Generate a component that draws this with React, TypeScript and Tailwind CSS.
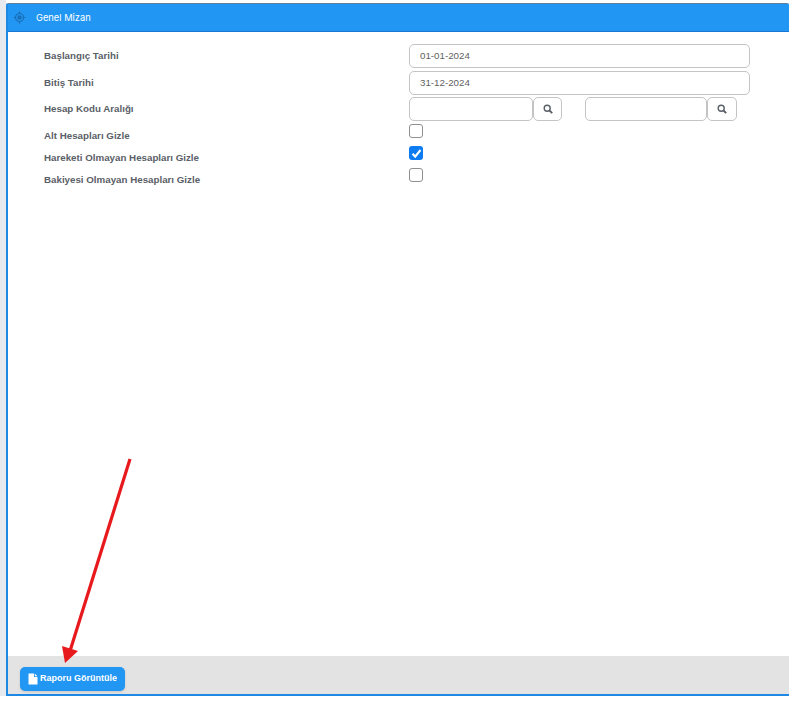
import React from "react";

function Search() {
  return (
    <svg width="10" height="10" viewBox="0 0 10 10" fill="none" stroke="#5a6068" strokeWidth="1.4">
      <circle cx="4.2" cy="4.2" r="3" />
      <path d="M6.5 6.5 9.2 9.2" strokeWidth="1.9" />
    </svg>
  );
}

function Label({ children }: { children: React.ReactNode }) {
  return <span className="w-[365px] shrink-0 text-[9.75px] font-bold text-[#5a6067]">{children}</span>;
}

function TextBox({ value, className }: { value?: string; className: string }) {
  return (
    <div className={`h-6 rounded-[5px] border border-[#c4c4c4] bg-white pl-[10px] text-[9.75px] leading-[22px] text-[#5f5f5f] ${className}`}>
      {value}
    </div>
  );
}

function SearchButton({ className }: { className: string }) {
  return (
    <div className={`flex h-6 items-center justify-center rounded-[5px] border border-[#c4c4c4] bg-white ${className}`}>
      <Search />
    </div>
  );
}

function Check({ checked }: { checked?: boolean }) {
  return checked ? (
    <div className="flex h-[14px] w-[14px] items-center justify-center rounded-[3px] bg-[#0d7bf2]">
      <svg width="11" height="11" viewBox="0 0 11 11" fill="none" stroke="#fff" strokeWidth="2.2">
        <path d="M1.500 5.800 4.200 8.600 9.500 2" />
      </svg>
    </div>
  ) : (
    <div className="h-[14px] w-[14px] rounded-[3px] border border-[#8f8f8f] bg-white" />
  );
}

function CheckRow({ label, checked }: { label: string; checked?: boolean }) {
  return (
    <div className="flex h-[22px] items-start">
      <div className="w-[365px] shrink-0 pt-[4px] leading-[12px]">
        <Label>{label}</Label>
      </div>
      <Check checked={checked} />
    </div>
  );
}

export default function App() {
  return (
    <div className="relative flex h-[704px] w-[798px] bg-white font-['Liberation_Sans',sans-serif]">
      <div className="h-[696px] w-[6px] shrink-0 bg-[#e6e9ee]" />
      <div className="mt-[3px] flex h-[693px] w-[783px] shrink-0 flex-col rounded-t-[2px] border-x-2 border-r-0 border-b-2 border-[#1e88e5] border-t border-t-[#5f7f9c] bg-white">
        <div className="flex h-[28px] shrink-0 items-center border-b border-[#1976d2] bg-[#2196f3] pl-[5px] font-['Inter',sans-serif] text-[9.3px] text-white">
          <svg width="13" height="13" viewBox="0 0 13 13" fill="none" stroke="#1a6fb8" strokeWidth="1.2">
            <circle cx="6.500" cy="6.500" r="4" />
            <circle cx="6.500" cy="6.500" r="1.600" fill="#1a6fb8" />
            <path d="M6.500 0.500v2M6.500 10.500v2M0.500 6.500h2M10.500 6.500h2" />
          </svg>
          <span className="ml-[10px] pt-px">Genel Mizan</span>
        </div>
        <div className="flex-1 pl-[36px] pt-3">
          <div className="flex h-6 items-center">
            <Label>Başlangıç Tarihi</Label>
            <TextBox value="01-01-2024" className="w-[341px]" />
          </div>
          <div className="mt-[3px] flex h-6 items-center">
            <Label>Bitiş Tarihi</Label>
            <TextBox value="31-12-2024" className="w-[341px]" />
          </div>
          <div className="mt-[2px] flex h-6 items-center">
            <Label>Hesap Kodu Aralığı</Label>
            <TextBox className="w-[124px]" />
            <SearchButton className="w-[29px]" />
            <TextBox className="ml-[23px] w-[122px]" />
            <SearchButton className="w-[30px]" />
          </div>
          <div className="mt-[3px]">
            <CheckRow label="Alt Hesapları Gizle" />
            <CheckRow label="Hareketi Olmayan Hesapları Gizle" checked />
            <CheckRow label="Bakiyesi Olmayan Hesapları Gizle" />
          </div>
        </div>
        <div className="flex h-[38px] shrink-0 items-start bg-[#e3e3e3] pl-3 pt-[11px]">
          <div className="flex h-6 w-[105px] items-center justify-center gap-[2px] rounded-[5px] bg-[#2196f3] text-[9px] font-bold text-white shadow-sm">
            <svg width="10" height="12" viewBox="0 0 10 12" fill="#fff">
              <path d="M0.500 0.500h5.500v3.500h3.500v7.500h-9zM6.800 0.500l2.700 2.800h-2.700z" />
            </svg>
            <span>Raporu Görüntüle</span>
          </div>
        </div>
      </div>
      <svg className="absolute left-[58px] top-[456px]" width="78" height="210" viewBox="0 0 78 210" fill="none">
        <path d="M72 3 12 195" stroke="#e8191c" strokeWidth="3.200" />
        <path d="M4 190 20 195 7 207Z" fill="#e8191c" />
      </svg>
    </div>
  );
}
